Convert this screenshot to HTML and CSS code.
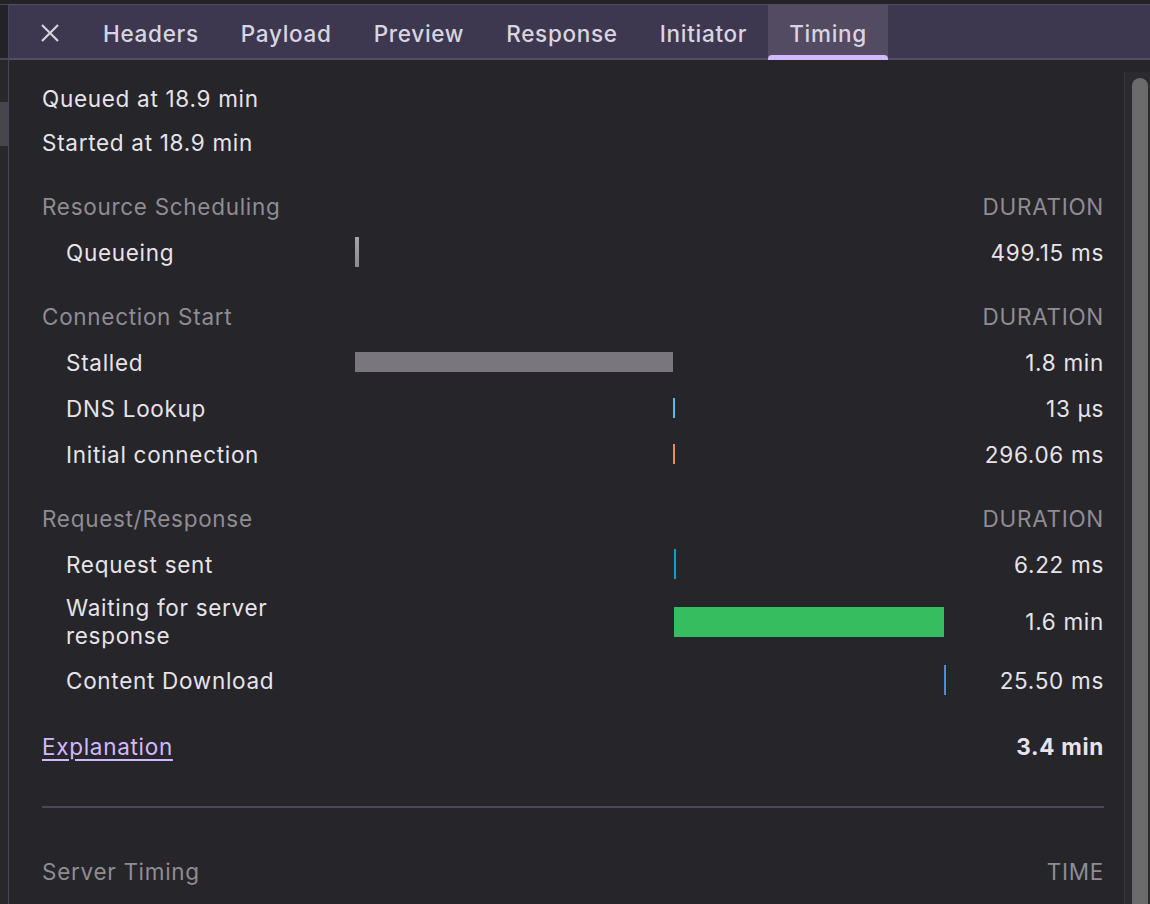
FILE: index.html
```html
<!DOCTYPE html>
<html lang="en">
<head>
    <meta charset="UTF-8">
    <title>Timing</title>
    <link rel="stylesheet" href="styles.css">
</head>
<body>

<div class="topstrip"></div>

<div class="frame">
    <!-- sliver of the request list on the left -->
    <div class="side">
        <div class="side-top"></div>
        <div class="side-row"></div>
    </div>

    <div class="panel">
        <div class="tabbar">
            <span class="close">
                <svg width="20" height="20" viewBox="0 0 20 20"><path d="M2 2 L18 18 M18 2 L2 18" stroke="#d6d3dc" stroke-width="2.2" fill="none"/></svg>
            </span>
            <span class="tab">Headers</span>
            <span class="tab">Payload</span>
            <span class="tab">Preview</span>
            <span class="tab">Response</span>
            <span class="tab">Initiator</span>
            <span class="tab active">Timing</span>
        </div>

        <div class="body">
            <div class="content">
                <div class="summary">
                    <div>Queued at 18.9 min</div>
                    <div>Started at 18.9 min</div>
                </div>

                <!-- Resource Scheduling -->
                <div class="section">
                    <div class="row head">
                        <span>Resource Scheduling</span>
                        <span></span>
                        <span class="dur">DURATION</span>
                    </div>
                    <div class="row">
                        <span class="label">Queueing</span>
                        <span class="track"><i class="bar queueing" style="margin-left: 0; width: 4px"></i></span>
                        <span class="dur">499.15 ms</span>
                    </div>
                </div>

                <!-- Connection Start -->
                <div class="section">
                    <div class="row head">
                        <span>Connection Start</span>
                        <span></span>
                        <span class="dur">DURATION</span>
                    </div>
                    <div class="row">
                        <span class="label">Stalled</span>
                        <span class="track"><i class="bar short stalled" style="margin-left: 0; width: 318px"></i></span>
                        <span class="dur">1.8 min</span>
                    </div>
                    <div class="row">
                        <span class="label">DNS Lookup</span>
                        <span class="track"><i class="bar short dns" style="margin-left: 318px; width: 2px"></i></span>
                        <span class="dur">13 µs</span>
                    </div>
                    <div class="row">
                        <span class="label">Initial connection</span>
                        <span class="track"><i class="bar short conn" style="margin-left: 318px; width: 2px"></i></span>
                        <span class="dur">296.06 ms</span>
                    </div>
                </div>

                <!-- Request/Response -->
                <div class="section">
                    <div class="row head">
                        <span>Request/Response</span>
                        <span></span>
                        <span class="dur">DURATION</span>
                    </div>
                    <div class="row">
                        <span class="label">Request sent</span>
                        <span class="track"><i class="bar sent" style="margin-left: 319px; width: 2px"></i></span>
                        <span class="dur">6.22 ms</span>
                    </div>
                    <div class="row tall">
                        <span class="label">Waiting for server<br>response</span>
                        <span class="track"><i class="bar waiting" style="margin-left: 319px; width: 270px"></i></span>
                        <span class="dur">1.6 min</span>
                    </div>
                    <div class="row">
                        <span class="label">Content Download</span>
                        <span class="track"><i class="bar download" style="margin-left: 589px; width: 2px"></i></span>
                        <span class="dur">25.50 ms</span>
                    </div>
                </div>

                <div class="section">
                    <div class="row total">
                        <a href="#">Explanation</a>
                        <span></span>
                        <span class="dur">3.4 min</span>
                    </div>
                </div>

                <hr>

                <div class="row head">
                    <span>Server Timing</span>
                    <span></span>
                    <span class="dur">TIME</span>
                </div>
            </div>

            <div class="scrollbar"><div class="thumb"></div></div>
        </div>
    </div>
</div>

</body>
</html>
```

FILE: styles.css
```css
html, body {
    margin: 0;
    height: 100%;
    overflow: hidden;
}
body {
    background-color: #262529;
    color: #e6e3ea;
    font-family: Inter, "Noto Sans", sans-serif;
    font-size: 22.5px;
    letter-spacing: 0.7px;
}
.topstrip {
    height: 4px;
    background-color: #232226;
}
.frame {
    display: flex;
    height: 900px;
}
.side {
    width: 8px;
    border-right: 1px solid #4a4458;
    background-color: #28272b;
    flex-shrink: 0;
}
.side-top {
    height: 53px;
    background-color: #232226;
    border-top: 1px solid #4a4458;
    border-bottom: 2px solid #4a4458;
}
.side-row {
    margin-top: 42px;
    height: 44px;
    background-color: #48464d;
}
.panel {
    flex: 1;
    display: flex;
    flex-direction: column;
    min-height: 0;
}
.tabbar {
    display: flex;
    align-items: stretch;
    flex-shrink: 0;
    height: 53px;
    background-color: #3d3850;
    border-top: 1px solid #554d66;
    border-bottom: 2px solid #554d66;
    padding-left: 31px;
}
.close {
    display: flex;
    align-items: center;
    padding-top: 3px;
    margin-right: 22px;
}
.tab {
    display: flex;
    align-items: center;
    padding: 4px 21px 0;
    color: #d9d5e0;
    font-weight: 500;
    position: relative;
}
.tab.active {
    background-color: #524b61;
}
.tab.active::after {
    content: "";
    position: absolute;
    left: 0;
    right: 0;
    bottom: -2px;
    height: 5px;
    background-color: #d1b9ff;
    border-radius: 4px 4px 0 0;
}
.body {
    flex: 1;
    display: flex;
    min-height: 0;
    overflow: hidden;
}
.content {
    flex: 1;
    padding: 17px 20px 0 33px;
}
.summary div {
    height: 44px;
    line-height: 44px;
}
.section {
    margin-top: 18px;
}
.row {
    display: grid;
    grid-template-columns: 313px 591px 1fr;
    align-items: center;
    height: 46px;
}
.row.tall {
    height: 70px;
    line-height: 28px;
}
.row.head {
    color: #8f8c94;
}
.label {
    padding-left: 24px;
}
.track {
    display: flex;
    align-items: center;
}
.bar {
    display: block;
    height: 30px;
}
.bar.short {
    height: 20px;
}
.dur {
    text-align: right;
}
.queueing {
    background: linear-gradient(#a6a4a8, #8c8a8f);
}
.stalled {
    background-color: #7a767d;
}
.dns {
    background-color: #4ec0f4;
}
.conn {
    background-color: #f28a4d;
}
.sent {
    background-color: #109fc6;
}
.waiting {
    background-color: #36bd5f;
}
.download {
    background-color: #4a8ae8;
}
.total {
    padding-top: 2px;
}
.total a {
    color: #d1b9ff;
    text-decoration: underline;
    text-underline-offset: 4px;
}
.total .dur {
    font-weight: 700;
}
hr {
    border: none;
    height: 2px;
    background-color: #4d4558;
    margin: 37px 0 40px 0;
}
.scrollbar {
    width: 25px;
    margin-top: 12px;
    background-color: #2b2a2e;
    border-left: 1px solid #3a393d;
    flex-shrink: 0;
}
.thumb {
    margin: 6px 2px 0 7px;
    height: 900px;
    background-color: #6b6b6b;
    border-radius: 8px 8px 0 0;
}
```
